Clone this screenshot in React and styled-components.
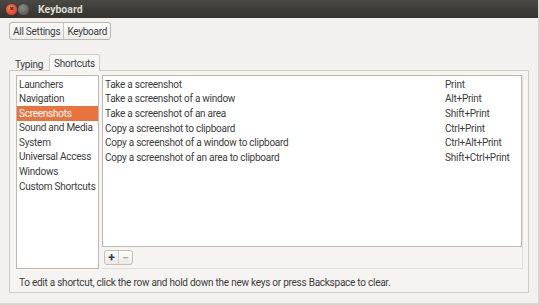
import React from "react";
import styled, { createGlobalStyle } from "styled-components";

const Global = createGlobalStyle`
  html, body { margin: 0; padding: 0; background: #f2f1f0; }
  body {
    font-family: Roboto, "Open Sans", sans-serif;
    font-size: 10px;
    letter-spacing: -0.25px;
    color: #3c3c3c;
  }
`;

const Window = styled.div`
  width: 540px;
  height: 305px;
  display: flex;
  flex-direction: column;
  background: #f2f1f0;
  box-sizing: border-box;
  border-right: 2px solid #d8d6d3;
  border-bottom: 2px solid #d8d6d3;
`;

const TitleBar = styled.div`
  height: 18px;
  flex: none;
  display: flex;
  align-items: center;
  gap: 1px;
  padding-left: 6px;
  background: linear-gradient(#4a4944, #3c3b37 60%, #35342f);
  color: #dfdbd2;
  font-weight: 700;
  font-size: 10.5px;
  letter-spacing: 0;
`;

const WinButton = styled.span`
  width: 11px;
  height: 11px;
  border-radius: 50%;
  display: flex;
  align-items: center;
  justify-content: center;
  background: ${(p) =>
    p.$close
      ? "radial-gradient(circle at 40% 35%, #f7805a, #e0452a 70%)"
      : "radial-gradient(circle at 40% 35%, #8e8c86, #5f5d58 70%)"};
  color: #3a2520;
  font-size: 8px;
  line-height: 1;
`;

const Title = styled.span`
  margin-left: 8px;
`;

const Body = styled.div`
  flex: 1;
  display: flex;
  flex-direction: column;
  padding: 4px 9px 0 9px;
`;

const Breadcrumbs = styled.div`
  display: flex;
  align-self: flex-start;
  height: 16px;
  border: 1px solid #bab7b1;
  border-radius: 3px;
  background: linear-gradient(#fbfbfa, #eeedeb);
  overflow: hidden;
`;

const Crumb = styled.span`
  display: flex;
  align-items: center;
  padding: 0 3px;
  color: #3c3c3c;
  & + & { border-left: 1px solid #c8c5bf; }
`;

const Tabs = styled.div`
  display: flex;
  align-items: flex-end;
  margin-top: 12px;
  padding-left: 5px;
  height: 18px;
`;

const Tab = styled.span`
  display: flex;
  align-items: center;
  height: ${(p) => (p.$active ? "17px" : "15px")};
  padding: 0 ${(p) => (p.$active ? "4px" : "0")};
  margin-right: 5px;
  box-sizing: border-box;
  border: 1px solid ${(p) => (p.$active ? "#cfccc7" : "transparent")};
  border-bottom: none;
  border-radius: 2px 2px 0 0;
  background: ${(p) => (p.$active ? "#f7f7f6" : "transparent")};
  position: relative;
  top: 1px;
`;

const Panel = styled.div`
  width: 520px;
  height: 223px;
  box-sizing: border-box;
  border: 1px solid #cfccc7;
  background: #f5f4f3;
  display: flex;
  flex-direction: column;
  padding: 4px 5px 0 6px;
`;

const Lists = styled.div`
  display: flex;
  gap: 3px;
  height: 194px;
`;

const List = styled.div`
  width: 83px;
  box-sizing: border-box;
  border: 1px solid #bdbab4;
  background: #fff;
  padding-top: 1px;
`;

const Item = styled.div`
  height: ${(p) => (p.$tall ? "16px" : "14.5px")};
  display: flex;
  align-items: center;
  padding-left: 2px;
  background: ${(p) => (p.$selected ? "#e8733f" : "transparent")};
  color: ${(p) => (p.$selected ? "#fff" : "#3c3c3c")};
  white-space: nowrap;
`;

const Right = styled.div`
  flex: 1;
  display: flex;
  flex-direction: column;
  border: 1px solid #e0deda;
  border-top: none;
  border-left: none;
`;

const Table = styled.div`
  height: 172px;
  box-sizing: border-box;
  border: 1px solid #bdbab4;
  background: #fff;
  padding-top: 1px;
`;

const Row = styled.div`
  height: 14.6px;
  display: flex;
  align-items: center;
  padding-left: 2px;
  justify-content: space-between;
`;

const Accel = styled.span`
  width: 76px;
`;

const Toolbar = styled.div`
  display: flex;
  padding: 3px 0 0 2px;
`;

const ToolGroup = styled.div`
  display: flex;
  height: 13px;
  border: 1px solid #c4c1bb;
  border-radius: 3px;
  background: linear-gradient(#fcfcfb, #ebeae8);
`;

const ToolButton = styled.span`
  width: 13px;
  display: flex;
  align-items: center;
  justify-content: center;
  font-size: 12px;
  font-weight: 700;
  color: ${(p) => (p.$disabled ? "#b3b0ab" : "#3c3c3c")};
  & + & { border-left: 1px solid #d2cfca; }
`;

const Hint = styled.div`
  padding: 8px 0 0 3px;
  white-space: nowrap;
`;

const categories = [
  "Launchers",
  "Navigation",
  "Screenshots",
  "Sound and Media",
  "System",
  "Universal Access",
  "Windows",
];

const shortcuts = [
  ["Take a screenshot", "Print"],
  ["Take a screenshot of a window", "Alt+Print"],
  ["Take a screenshot of an area", "Shift+Print"],
  ["Copy a screenshot to clipboard", "Ctrl+Print"],
  ["Copy a screenshot of a window to clipboard", "Ctrl+Alt+Print"],
  ["Copy a screenshot of an area to clipboard", "Shift+Ctrl+Print"],
];

export default function App() {
  return (
    <>
      <Global />
      <Window>
        <TitleBar>
          <WinButton $close>×</WinButton>
          <WinButton />
          <Title>Keyboard</Title>
        </TitleBar>
        <Body>
          <Breadcrumbs>
            <Crumb>All Settings</Crumb>
            <Crumb>Keyboard</Crumb>
          </Breadcrumbs>
          <Tabs>
            <Tab>Typing</Tab>
            <Tab $active>Shortcuts</Tab>
          </Tabs>
          <Panel>
            <Lists>
              <List>
                {categories.map((c) => (
                  <Item key={c} $selected={c === "Screenshots"}>
                    {c}
                  </Item>
                ))}
                <Item $tall>Custom Shortcuts</Item>
              </List>
              <Right>
                <Table>
                  {shortcuts.map(([name, key]) => (
                    <Row key={name}>
                      <span>{name}</span>
                      <Accel>{key}</Accel>
                    </Row>
                  ))}
                </Table>
                <Toolbar>
                  <ToolGroup>
                    <ToolButton>+</ToolButton>
                    <ToolButton $disabled>−</ToolButton>
                  </ToolGroup>
                </Toolbar>
              </Right>
            </Lists>
            <Hint>
              To edit a shortcut, click the row and hold down the new keys or press Backspace to clear.
            </Hint>
          </Panel>
        </Body>
      </Window>
    </>
  );
}
